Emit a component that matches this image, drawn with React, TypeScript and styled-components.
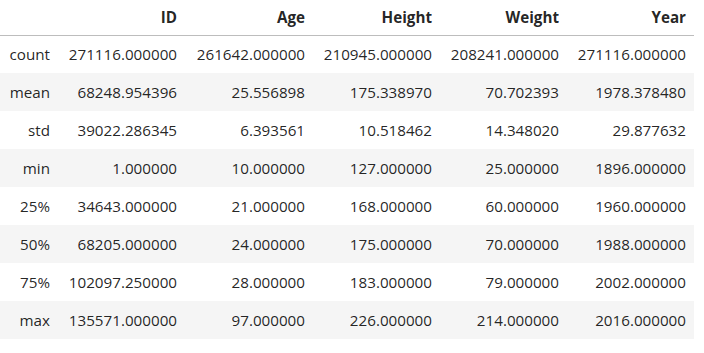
import React from "react";
import styled, { createGlobalStyle } from "styled-components";

const Global = createGlobalStyle`
  html, body { margin: 0; padding: 0; background: #ffffff; }
  body { font-family: "Open Sans", "Noto Sans", sans-serif; }
  *, *::before, *::after { box-sizing: border-box; }
`;

const Table = styled.table`
  border-collapse: collapse;
  table-layout: fixed;
  width: 694px;
  font-size: 15.2px;
  color: rgba(0, 0, 0, 0.87);
`;

const HeadCell = styled.th<{ $w: number }>`
  width: ${(p) => p.$w}px;
  height: 35px;
  padding: 0 8px 1px 0;
  text-align: right;
  font-weight: 700;
  vertical-align: middle;
  border-bottom: 1px solid #bdbdbd;
  white-space: nowrap;
`;

const Row = styled.tr<{ $odd: boolean }>`
  background: ${(p) => (p.$odd ? "#ffffff" : "#f5f5f5")};
`;

const IndexCell = styled.th`
  height: 38px;
  padding: 0 8px 0 0;
  text-align: right;
  font-weight: 400;
  vertical-align: middle;
  white-space: nowrap;
`;

const Cell = styled.td`
  height: 38px;
  padding: 0 8px 0 0;
  text-align: right;
  vertical-align: middle;
  white-space: nowrap;
`;

const columns = [
  { name: "", w: 58 },
  { name: "ID", w: 127 },
  { name: "Age", w: 128 },
  { name: "Height", w: 127 },
  { name: "Weight", w: 127 },
  { name: "Year", w: 127 },
];

const rows: [string, string[]][] = [
  ["count", ["271116.000000", "261642.000000", "210945.000000", "208241.000000", "271116.000000"]],
  ["mean", ["68248.954396", "25.556898", "175.338970", "70.702393", "1978.378480"]],
  ["std", ["39022.286345", "6.393561", "10.518462", "14.348020", "29.877632"]],
  ["min", ["1.000000", "10.000000", "127.000000", "25.000000", "1896.000000"]],
  ["25%", ["34643.000000", "21.000000", "168.000000", "60.000000", "1960.000000"]],
  ["50%", ["68205.000000", "24.000000", "175.000000", "70.000000", "1988.000000"]],
  ["75%", ["102097.250000", "28.000000", "183.000000", "79.000000", "2002.000000"]],
  ["max", ["135571.000000", "97.000000", "226.000000", "214.000000", "2016.000000"]],
];

export default function App() {
  return (
    <>
      <Global />
      <Table>
        <thead>
          <tr>
            {columns.map((c, i) => (
              <HeadCell key={i} $w={c.w}>
                {c.name}
              </HeadCell>
            ))}
          </tr>
        </thead>
        <tbody>
          {rows.map(([label, vals], i) => (
            <Row key={label} $odd={i % 2 === 0}>
              <IndexCell>{label}</IndexCell>
              {vals.map((v, j) => (
                <Cell key={j}>{v}</Cell>
              ))}
            </Row>
          ))}
        </tbody>
      </Table>
    </>
  );
}
